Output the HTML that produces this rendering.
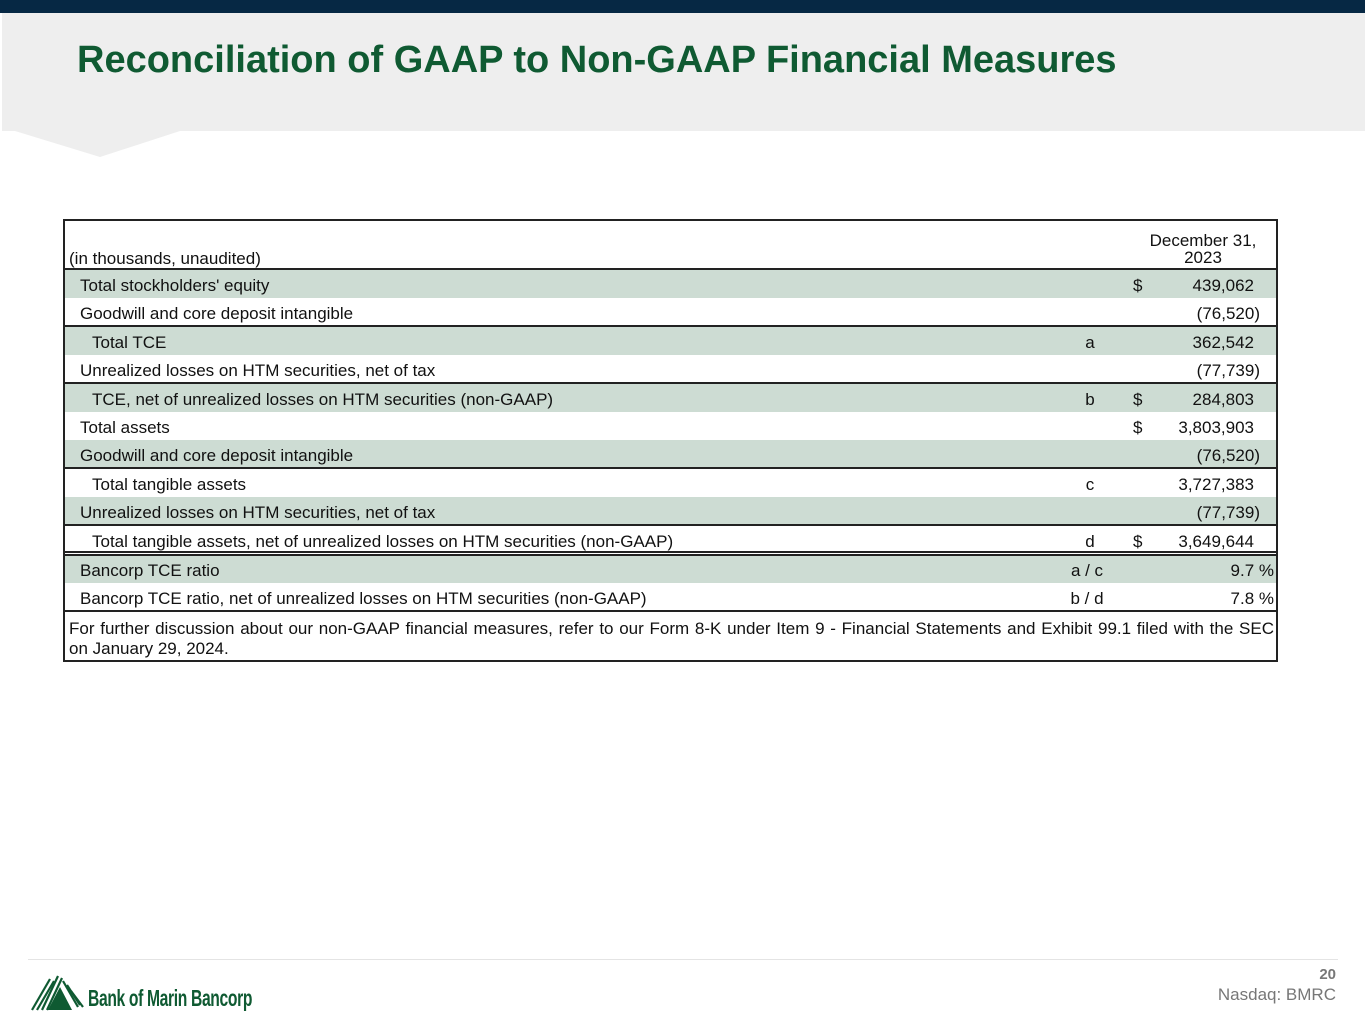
<!DOCTYPE html>
<html><head><meta charset="utf-8"><style>
body{margin:0;width:1365px;height:1024px;position:relative;background:#fff;font-family:"Liberation Sans",sans-serif;overflow:hidden}
.a{position:absolute}
.bar{left:0;top:0;width:1365px;height:13px;background:#062844}
.hdr{left:2px;top:13px;width:1363px;height:118px;background:#eeeeee}
h1{position:absolute;left:77px;top:39px;margin:0;font-size:38px;font-weight:bold;color:#0f5a32;letter-spacing:0px}
.tbl{left:63px;top:219px;width:1215px;height:443px;border:2px solid #222;box-sizing:border-box}
.r{position:absolute;left:65px;width:1211px;height:28px;font-size:17px;color:#111}
.s{background:#cddcd3}
.r span{position:absolute;top:6px;white-space:nowrap}
.l{left:15px}.li{left:27px}
.c{left:1000px;width:50px;text-align:center}
.d{left:1068px}
.v{right:22px}
.p{right:16px}
.pc{right:2px}
.hl{position:absolute;left:65px;width:1211px;height:2px;background:#222}
</style></head><body>
<div class="a bar"></div>
<div class="a hdr"></div>
<svg class="a" style="left:0;top:130px" width="190" height="28"><polygon points="15,1 180,1 100,27" fill="#eeeeee"/></svg>
<h1>Reconciliation of GAAP to Non-GAAP Financial Measures</h1>

<div class="a tbl"></div>
<div class="a" style="left:69px;top:249px;font-size:17px;color:#111">(in thousands, unaudited)</div>
<div class="a" style="left:1128px;top:232px;width:150px;text-align:center;font-size:17px;line-height:17px;color:#111">December 31,<br>2023</div>
<div class="hl" style="top:268px"></div>

<div class="r s" style="top:270px"><span class="l">Total stockholders' equity</span><span class="d">$</span><span class="v">439,062</span></div>
<div class="r" style="top:298px"><span class="l">Goodwill and core deposit intangible</span><span class="p">(76,520)</span></div>
<div class="hl" style="top:325px"></div>
<div class="r s" style="top:327px"><span class="li">Total TCE</span><span class="c">a</span><span class="v">362,542</span></div>
<div class="r" style="top:355px"><span class="l">Unrealized losses on HTM securities, net of tax</span><span class="p">(77,739)</span></div>
<div class="hl" style="top:382px"></div>
<div class="r s" style="top:384px"><span class="li">TCE, net of unrealized losses on HTM securities (non-GAAP)</span><span class="c">b</span><span class="d">$</span><span class="v">284,803</span></div>
<div class="r" style="top:412px"><span class="l">Total assets</span><span class="d">$</span><span class="v">3,803,903</span></div>
<div class="r s" style="top:440px"><span class="l">Goodwill and core deposit intangible</span><span class="p">(76,520)</span></div>
<div class="hl" style="top:467px"></div>
<div class="r" style="top:469px"><span class="li">Total tangible assets</span><span class="c">c</span><span class="v">3,727,383</span></div>
<div class="r s" style="top:497px"><span class="l">Unrealized losses on HTM securities, net of tax</span><span class="p">(77,739)</span></div>
<div class="hl" style="top:524px"></div>
<div class="r" style="top:526px"><span class="li">Total tangible assets, net of unrealized losses on HTM securities (non-GAAP)</span><span class="c">d</span><span class="d">$</span><span class="v">3,649,644</span></div>
<div class="hl" style="top:551px"></div>
<div class="hl" style="top:554px"></div>
<div class="r s" style="top:556px;height:27px"><span class="l" style="top:5px">Bancorp TCE ratio</span><span class="c" style="top:5px;left:997px">a / c</span><span class="pc" style="top:5px">9.7 %</span></div>
<div class="r" style="top:583px"><span class="l">Bancorp TCE ratio, net of unrealized losses on HTM securities (non-GAAP)</span><span class="c" style="left:997px">b / d</span><span class="pc">7.8 %</span></div>
<div class="hl" style="top:610px"></div>
<div class="a" style="left:69px;top:619px;width:1205px;font-size:17px;line-height:20px;color:#111;text-align:justify;text-align-last:justify">For further discussion about our non-GAAP financial measures, refer to our Form 8-K under Item 9 - Financial Statements and Exhibit 99.1 filed with the SEC</div>
<div class="a" style="left:69px;top:639px;font-size:17px;line-height:20px;color:#111">on January 29, 2024.</div>

<div class="a" style="left:28px;top:959px;width:1310px;height:1px;background:#e4e4e4"></div>
<svg class="a" style="left:30px;top:973px" width="56" height="40" viewBox="0 0 56 40">
<g stroke="#0f5a32" stroke-width="2.2" fill="none">
<line x1="2" y1="37" x2="20" y2="6"/><line x1="7" y1="37" x2="24" y2="8"/><line x1="12" y1="37" x2="28" y2="3"/><line x1="17" y1="37" x2="32" y2="5"/><line x1="33" y1="8" x2="48" y2="34"/><line x1="37" y1="12" x2="50" y2="32"/><line x1="41" y1="18" x2="53" y2="34"/>
</g>
<polygon points="18,37 30,14 42,37" fill="#0f5a32"/>
</svg>
<div class="a" style="left:88px;top:985px;font-size:23px;font-weight:bold;color:#0f5a32;transform:scaleX(0.68);transform-origin:left;letter-spacing:-0.5px;white-space:nowrap">Bank of Marin Bancorp</div>
<div class="a" style="right:29px;top:966px;font-size:15px;font-weight:bold;color:#777">20</div>
<div class="a" style="right:29px;top:985px;font-size:17px;color:#777">Nasdaq: BMRC</div>
</body></html>
